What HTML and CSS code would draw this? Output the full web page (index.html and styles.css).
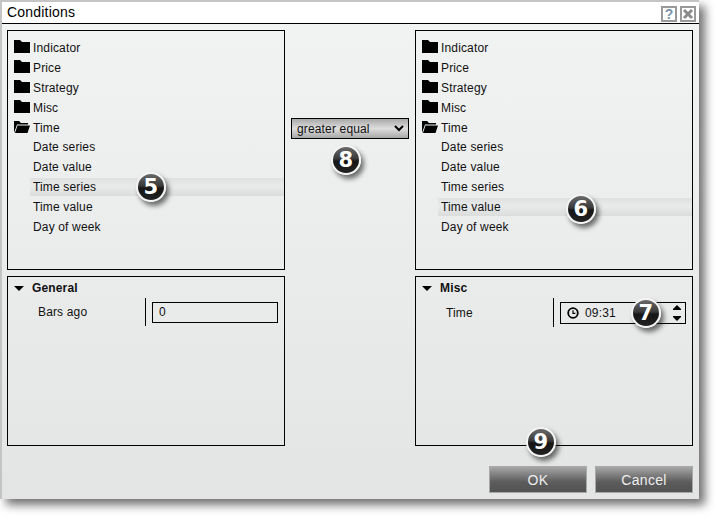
FILE: index.html
```html
<!DOCTYPE html>
<html lang="en">
<head>
    <meta charset="UTF-8">
    <title>Conditions</title>
    <link rel="stylesheet" href="styles.css">
</head>
<body>

<div class="dialog">
    <!-- Title bar -->
    <div class="titlebar">
        <span class="title">Conditions</span>
        <div class="title-buttons">
            <div class="title-btn help">?</div>
            <div class="title-btn">
                <svg width="12" height="12" viewBox="0 0 12 12"><path d="M2 2L10 10M10 2L2 10" stroke="#8a8a8a" stroke-width="3"/></svg>
            </div>
        </div>
    </div>

    <div class="content">
        <!-- Left tree -->
        <div class="panel tree">
            <div class="row folder-row"><svg class="folder" viewBox="0 0 16 13"><path d="M0 0H6L8 2H16V13H0Z"/></svg>Indicator</div>
            <div class="row folder-row"><svg class="folder" viewBox="0 0 16 13"><path d="M0 0H6L8 2H16V13H0Z"/></svg>Price</div>
            <div class="row folder-row"><svg class="folder" viewBox="0 0 16 13"><path d="M0 0H6L8 2H16V13H0Z"/></svg>Strategy</div>
            <div class="row folder-row"><svg class="folder" viewBox="0 0 16 13"><path d="M0 0H6L8 2H16V13H0Z"/></svg>Misc</div>
            <div class="row folder-row"><svg class="folder" viewBox="0 0 16 13"><path d="M0 1H5L7 3H14V4.5H3L0 13ZM3.5 5.5H16L13.5 13H1Z"/></svg>Time</div>
            <div class="row child">Date series</div>
            <div class="row child">Date value</div>
            <div class="row child selected">Time series</div>
            <div class="row child">Time value</div>
            <div class="row child">Day of week</div>
        </div>

        <!-- Operator -->
        <div class="operator">
            <div class="select">
                <span>greater equal</span>
                <svg width="10" height="7" viewBox="0 0 10 7"><path d="M1 1L5 5L9 1" fill="none" stroke="#000" stroke-width="2"/></svg>
            </div>
        </div>

        <!-- Right tree -->
        <div class="panel tree">
            <div class="row folder-row"><svg class="folder" viewBox="0 0 16 13"><path d="M0 0H6L8 2H16V13H0Z"/></svg>Indicator</div>
            <div class="row folder-row"><svg class="folder" viewBox="0 0 16 13"><path d="M0 0H6L8 2H16V13H0Z"/></svg>Price</div>
            <div class="row folder-row"><svg class="folder" viewBox="0 0 16 13"><path d="M0 0H6L8 2H16V13H0Z"/></svg>Strategy</div>
            <div class="row folder-row"><svg class="folder" viewBox="0 0 16 13"><path d="M0 0H6L8 2H16V13H0Z"/></svg>Misc</div>
            <div class="row folder-row"><svg class="folder" viewBox="0 0 16 13"><path d="M0 1H5L7 3H14V4.5H3L0 13ZM3.5 5.5H16L13.5 13H1Z"/></svg>Time</div>
            <div class="row child">Date series</div>
            <div class="row child">Date value</div>
            <div class="row child">Time series</div>
            <div class="row child selected">Time value</div>
            <div class="row child">Day of week</div>
        </div>

        <!-- Left properties -->
        <div class="panel props">
            <div class="group"><span class="arrow"></span>General</div>
            <div class="prop">
                <span class="prop-label">Bars ago</span>
                <div class="prop-input">0</div>
            </div>
        </div>

        <div></div>

        <!-- Right properties -->
        <div class="panel props">
            <div class="group"><span class="arrow"></span>Misc</div>
            <div class="prop tall">
                <span class="prop-label">Time</span>
                <div class="prop-input">
                    <svg class="clock" width="12" height="12" viewBox="0 0 12 12"><circle cx="6" cy="6" r="4.8" fill="none" stroke="#000" stroke-width="1.8"/><path d="M6 3.2V6.3H8.4" fill="none" stroke="#000" stroke-width="1.2"/></svg>
                    <span>09:31</span>
                    <div class="spinner">
                        <svg width="8" height="5" viewBox="0 0 8 5"><path d="M4 0L8 4V5H0V4Z"/></svg>
                        <svg width="8" height="5" viewBox="0 0 8 5"><path d="M0 0H8V1L4 5L0 1Z"/></svg>
                    </div>
                </div>
            </div>
        </div>
    </div>

    <div class="footer">
        <button class="btn">OK</button>
        <button class="btn">Cancel</button>
    </div>

    <!-- Callout numbers -->
    <div class="badge badge-5">5</div>
    <div class="badge badge-6">6</div>
    <div class="badge badge-7">7</div>
    <div class="badge badge-8">8</div>
    <div class="badge badge-9">9</div>
</div>

</body>
</html>
```
FILE: styles.css
```css
html, body {
    margin: 0;
    padding: 0;
    background-color: #fff;
}

body {
    width: 716px;
    height: 516px;
    overflow: hidden;
    font-family: 'Liberation Sans', Arial, sans-serif;
    font-size: 12px;
    letter-spacing: 0.15px;
    color: #111;
}

/* Dialog window */
.dialog {
    position: relative;
    width: 697px;
    height: 497px;
    border-top: 2px solid #c4c4c4;
    border-left: 2px solid #c4c4c4;
    background: linear-gradient(#f2f4f4, #e3e4e4);
    box-shadow: 6px 6px 9px rgba(0, 0, 0, 0.55);
}

.titlebar {
    height: 21px;
    padding: 0 3px 0 5px;
    display: flex;
    align-items: center;
    justify-content: space-between;
    background-color: #fff;
    border-bottom: 1px solid #000;
}

.title {
    margin-bottom: 2px;
    font-size: 14px;
    letter-spacing: 0.2px;
    color: #000;
}

.title-buttons {
    display: flex;
    gap: 3px;
    margin-top: 2px;
}

.title-btn {
    width: 12px;
    height: 12px;
    border: 2px solid #999;
    display: flex;
    align-items: center;
    justify-content: center;
    background-color: #fff;
}

.title-btn.help {
    font-size: 14px;
    font-weight: bold;
    color: #7c93ad;
}

/* Main grid */
.content {
    display: grid;
    grid-template-columns: 278px 118px 278px;
    grid-template-rows: 240px 170px;
    gap: 6px;
    padding: 6px 0 0 5px;
}

.panel {
    box-sizing: border-box;
    border: 1px solid #000;
}

.tree {
    padding-top: 6px;
}

.row {
    box-sizing: border-box;
    height: 20px;
    display: flex;
    align-items: center;
    padding-left: 6px;
}

.folder-row {
    padding-top: 2px;
}

.folder {
    width: 16px;
    height: 13px;
    margin-top: -3px;
    margin-right: 3px;
    flex: none;
}

.row.child {
    margin-left: 22px;
    padding-left: 3px;
}

.row.selected {
    height: 18px;
    margin-top: 1px;
    margin-bottom: 1px;
    background: linear-gradient(#dfe0e0, #e9eaea 45%, #dbdcdc);
}

/* Operator dropdown */
.operator {
    padding-top: 88px;
}

.select {
    box-sizing: border-box;
    height: 21px;
    border: 1px solid #000;
    padding: 0 4px 0 5px;
    display: flex;
    align-items: center;
    justify-content: space-between;
    background: linear-gradient(#a8a8a8, #dedede 50%, #a8a8a8);
}

/* Property grids */
.props {
    padding-top: 4px;
}

.group {
    height: 14px;
    display: flex;
    align-items: center;
    padding-left: 6px;
    font-weight: bold;
}

.arrow {
    width: 0;
    height: 0;
    margin-right: 8px;
    border-left: 5px solid transparent;
    border-right: 5px solid transparent;
    border-top: 5px solid #000;
}

.prop {
    height: 28px;
    margin-top: 3px;
    display: flex;
    align-items: center;
}

.prop.tall {
    height: 29px;
}

.prop-label {
    box-sizing: border-box;
    width: 138px;
    height: 100%;
    padding-left: 30px;
    display: flex;
    align-items: center;
    border-right: 1px solid #000;
}

.prop-input {
    box-sizing: border-box;
    width: 126px;
    height: 21px;
    margin-left: 6px;
    padding: 0 4px 0 6px;
    display: flex;
    align-items: center;
    border: 1px solid #000;
    background-color: #e9eaea;
}

.prop.tall .prop-input {
    height: 22px;
    background: none;
}

.clock {
    margin-right: 6px;
}

.spinner {
    margin-left: auto;
    display: flex;
    flex-direction: column;
    gap: 6px;
}

.spinner svg {
    display: block;
}

/* Bottom buttons */
.footer {
    display: flex;
    justify-content: flex-end;
    gap: 8px;
    padding: 20px 6px 0 0;
}

.btn {
    width: 98px;
    height: 27px;
    padding: 0;
    border: 1px solid #a9a9a9;
    background: linear-gradient(#a6a6a6, #5c5c5c 60%, #525252);
    color: #eee;
    font-family: 'Liberation Sans', Arial, sans-serif;
    font-size: 14px;
    letter-spacing: 0.3px;
}

/* Numbered callouts */
.badge {
    position: absolute;
    box-sizing: border-box;
    width: 30px;
    height: 30px;
    display: flex;
    align-items: center;
    justify-content: center;
    border: 2px solid #f4f4f4;
    border-radius: 50%;
    background: linear-gradient(#6a6a6a, #3a3a3a 45%, #161616 55%, #222);
    box-shadow: 3px 4px 5px rgba(0, 0, 0, 0.55);
    color: #fff;
    font-family: 'DejaVu Sans', sans-serif;
    font-size: 21px;
    font-weight: bold;
}

.badge-5 { left: 134px; top: 170px; }
.badge-6 { left: 564px; top: 192px; }
.badge-7 { left: 629px; top: 296px; }
.badge-8 { left: 329px; top: 143px; }
.badge-9 { left: 524px; top: 425px; }
```
